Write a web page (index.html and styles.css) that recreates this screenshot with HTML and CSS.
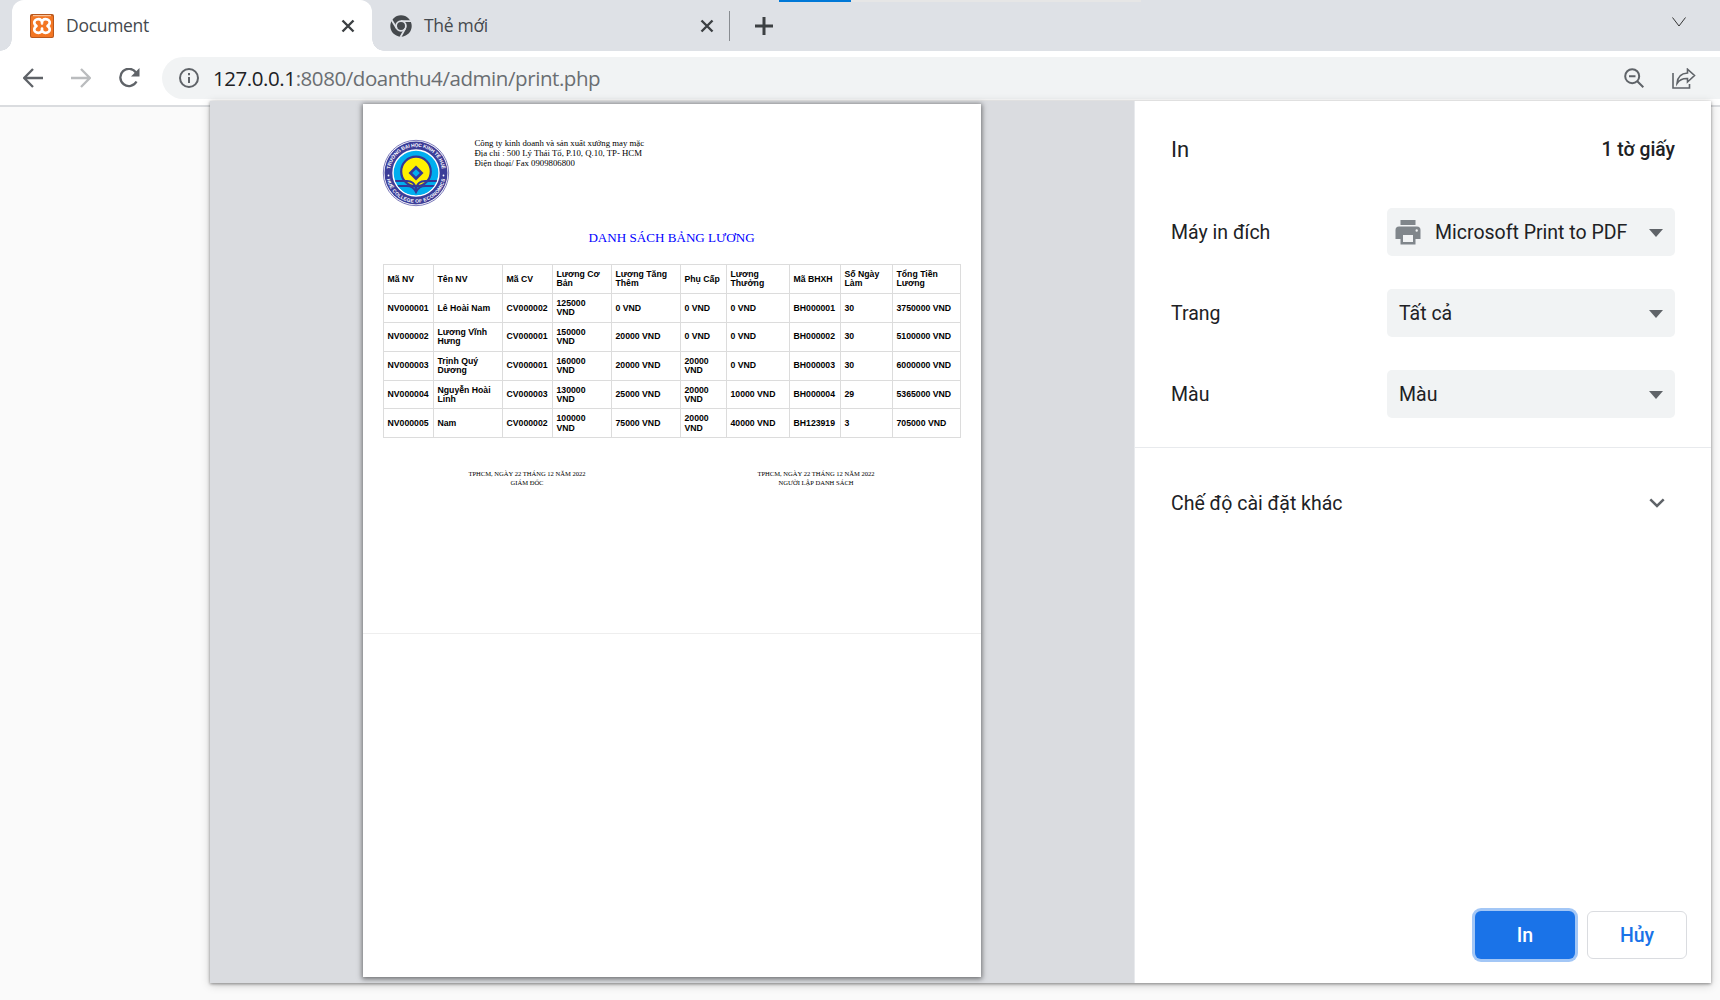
FILE: index.html
```html
<!DOCTYPE html>
<html lang="vi">
<head>
<meta charset="utf-8">
<title>Document</title>
<link rel="stylesheet" href="styles.css">
</head>
<body>
<div class="browser">
  <header class="tabstrip">
    <div class="tab active">
      <svg class="favicon" width="24" height="24" viewBox="0 0 24 24"><rect width="24" height="24" rx="2" fill="#b8571c"/><rect x="1" y="1.500" width="22" height="21.500" rx="1.500" fill="#f37623"/><rect x="3" y="1" width="18" height="1.200" fill="#f9c39b"/><path d="M12 9.500C12.500 6.500 10.500 5.200 8.500 5.200C5.500 5.200 4 7 4.300 9C4.500 10.500 5.500 11.200 6.500 12C5.500 12.800 4.500 13.500 4.300 15C4 17 5.500 18.800 8.500 18.800C10.500 18.800 12.500 17.500 12 14.500C11.500 17.500 13.500 18.800 15.500 18.800C18.500 18.800 20 17 19.700 15C19.500 13.500 18.500 12.800 17.500 12C18.500 11.200 19.500 10.500 19.700 9C20 7 18.500 5.200 15.500 5.200C13.500 5.200 11.500 6.500 12 9.500z" fill="none" stroke="#fff" stroke-width="2.700" stroke-linejoin="round"/></svg>
      <span class="tab-title">Document</span>
      <svg class="close" width="14" height="14" viewBox="0 0 14 14"><path d="M1.500 1.500l11 11M12.500 1.500l-11 11"/></svg>
    </div>
    <div class="tab">
      <svg class="favicon" width="22" height="22" viewBox="0 0 22 22"><circle cx="11" cy="11" r="10.700" fill="#45494d"/><circle cx="11" cy="11" r="4.900" fill="none" stroke="#dee1e6" stroke-width="1.800"/><path d="M11 6.100H21M6.800 13.500L1.600 5M15.200 13.500L10.500 22" stroke="#dee1e6" stroke-width="1.800" fill="none"/></svg>
      <span class="tab-title">Thẻ mới</span>
      <svg class="close" width="14" height="14" viewBox="0 0 14 14"><path d="M1.500 1.500l11 11M12.500 1.500l-11 11"/></svg>
    </div>
    <div class="tab-divider"></div>
    <svg class="plus" width="18" height="18" viewBox="0 0 18 18"><path d="M9 0v18M0 9h18"/></svg>
    <svg class="menu-arrow" width="14" height="10" viewBox="0 0 14 10"><path d="M.5 .5L7 9L13.500 .5"/></svg>
    <div class="progress"><i></i></div>
  </header>
  <nav class="toolbar">
    <svg class="nav" width="20" height="20" viewBox="0 0 20 20"><path d="M20 10H1.500M10 1L1.200 10L10 19"/></svg>
    <svg class="nav forward" width="20" height="20" viewBox="0 0 20 20"><path d="M0 10H18.500M10 1L18.800 10L10 19"/></svg>
    <svg class="nav" width="21" height="20" viewBox="0 0 21 20"><path d="M17.500 13.500A8.600 8.600 0 1 1 17 4.500"/><path class="solid" d="M20.500 0V8.500H12z"/></svg>
    <div class="address">
      <svg class="info" width="20" height="20" viewBox="0 0 20 20"><circle cx="10" cy="10" r="9"/><path d="M10 9v6M10 5v2.200"/></svg>
      <span class="url"><b>127.0.0.1</b>:8080/doanthu4/admin/print.php</span>
      <svg class="magnifier" width="21" height="21" viewBox="0 0 21 21"><circle cx="8.200" cy="8.200" r="7"/><path d="M13.300 13.300l6 6M5 8.200h6.500"/></svg>
      <svg class="share" width="24" height="21" viewBox="0 0 24 21"><path d="M1 5V20H17.500V16M5 15.500C5.500 8.500 9 5.300 15.500 5V1.200L22.500 7.500L15.500 14V10.500C10.500 10.300 7.500 11.700 5 15.500z"/></svg>
    </div>
  </nav>
  <main class="content">
    <section class="dialog">
      <div class="preview">
        <article class="sheet">
          <div class="letterhead">
            <svg class="logo" width="68" height="68" viewBox="0 0 68 68">
              <defs><path id="arc-top" d="M7.800 34a26.200 26.200 0 0 1 52.400 0"/><path id="arc-bottom" d="M4.200 34a29.800 29.800 0 0 0 59.600 0"/><clipPath id="disc"><circle cx="34" cy="34" r="22.300"/></clipPath></defs>
              <circle cx="34" cy="34" r="32.700" fill="#fff" stroke="#5a58a8" stroke-width=".8"/>
              <circle cx="34" cy="34" r="31.500" fill="#3b3d98"/>
              <circle cx="34" cy="34" r="23" fill="#00aeef" stroke="#fff" stroke-width="1.400"/>
              <g clip-path="url(#disc)"><circle cx="34" cy="32.500" r="14.800" fill="#fff200" stroke="#343796" stroke-width="2.200"/>
              <path d="M10 47h14q7 0 10 5q3-5 10-5h14v12H10z" fill="#00aeef"/>
              <path d="M10 42h15q7 0 9 7q2-7 9-7h15M10 47h15q6 0 9 6q3-6 9-6h15" fill="none" stroke="#343796" stroke-width="2"/></g>
              <path d="M34 26.500l7.500 7.500L34 41.500l-7.500-7.500z" fill="#343796"/><path d="M34 30.200l3.800 3.800L34 37.800l-3.800-3.800z" fill="#00aeef"/>
              <g class="ring-text"><text><textPath href="#arc-top" startOffset="50%" text-anchor="middle" textLength="74">TRƯỜNG ĐẠI HỌC KINH TẾ HUẾ</textPath></text><text><textPath href="#arc-bottom" startOffset="50%" text-anchor="middle" textLength="81">HUẾ COLLEGE OF ECONOMICS</textPath></text></g>
              <circle cx="6.500" cy="36.500" r=".9" fill="#fff"/><circle cx="61.500" cy="36.500" r=".9" fill="#fff"/>
            </svg>
            <div class="company"><div>Công ty kinh doanh và sản xuất xưởng may mặc</div><div>Địa chỉ : 500 Lý Thái Tổ, P.10, Q.10, TP- HCM</div><div>Điện thoại/ Fax 0909806800</div></div>
          </div>
          <h1 class="title">DANH SÁCH BẢNG LƯƠNG</h1>
          <table class="salary">
            <colgroup><col class="c1"><col class="c2"><col class="c3"><col class="c4"><col class="c5"><col class="c6"><col class="c7"><col class="c8"><col class="c9"><col class="c10"></colgroup>
            <tr><th>Mã NV</th><th>Tên NV</th><th>Mã CV</th><th>Lương Cơ<br>Bản</th><th>Lương Tăng<br>Thêm</th><th>Phụ Cấp</th><th>Lương<br>Thưởng</th><th>Mã BHXH</th><th>Số Ngày<br>Làm</th><th>Tổng Tiền<br>Lương</th></tr>
            <tr><td>NV000001</td><td>Lê Hoài Nam</td><td>CV000002</td><td>125000<br>VND</td><td>0 VND</td><td>0 VND</td><td>0 VND</td><td>BH000001</td><td>30</td><td>3750000 VND</td></tr>
            <tr><td>NV000002</td><td>Lương Vĩnh<br>Hưng</td><td>CV000001</td><td>150000<br>VND</td><td>20000 VND</td><td>0 VND</td><td>0 VND</td><td>BH000002</td><td>30</td><td>5100000 VND</td></tr>
            <tr><td>NV000003</td><td>Trịnh Quý<br>Dương</td><td>CV000001</td><td>160000<br>VND</td><td>20000 VND</td><td>20000<br>VND</td><td>0 VND</td><td>BH000003</td><td>30</td><td>6000000 VND</td></tr>
            <tr><td>NV000004</td><td>Nguyễn Hoài<br>Linh</td><td>CV000003</td><td>130000<br>VND</td><td>25000 VND</td><td>20000<br>VND</td><td>10000 VND</td><td>BH000004</td><td>29</td><td>5365000 VND</td></tr>
            <tr><td>NV000005</td><td>Nam</td><td>CV000002</td><td>100000<br>VND</td><td>75000 VND</td><td>20000<br>VND</td><td>40000 VND</td><td>BH123919</td><td>3</td><td>705000 VND</td></tr>
          </table>
          <div class="signatures">
            <div>TPHCM, NGÀY 22 THÁNG 12 NĂM 2022<br>GIÁM ĐỐC</div>
            <div>TPHCM, NGÀY 22 THÁNG 12 NĂM 2022<br>NGƯỜI LẬP DANH SÁCH</div>
          </div>
          <hr class="fold">
        </article>
      </div>
      <aside class="settings">
        <div class="heading"><span class="heading-title">In</span><span class="count">1 tờ giấy</span></div>
        <div class="options">
          <div class="option"><span>Máy in đích</span><div class="select with-icon"><svg class="printer" width="26" height="26" viewBox="0 0 26 26"><path fill-rule="evenodd" d="M5.500 1h15v5h-15zM4 7.500h18a3.500 3.500 0 0 1 3.500 3.500v9h-5v5.500h-15V20h-5v-9A3.500 3.500 0 0 1 4 7.500zM8 16h10v7H8zM20.500 11.500a1.200 1.200 0 1 0 2.400 0a1.200 1.200 0 1 0-2.400 0z"/></svg><span>Microsoft Print to PDF</span><i class="caret"></i></div></div>
          <div class="option"><span>Trang</span><div class="select"><span>Tất cả</span><i class="caret"></i></div></div>
          <div class="option"><span>Màu</span><div class="select"><span>Màu</span><i class="caret"></i></div></div>
        </div>
        <div class="more"><span>Chế độ cài đặt khác</span><svg width="16" height="10" viewBox="0 0 16 10"><path d="M1.300 1.300L8 8L14.700 1.300"/></svg></div>
        <div class="actions"><button class="primary">In</button><button class="cancel">Hủy</button></div>
      </aside>
    </section>
  </main>
</div>
</body>
</html>
```
FILE: styles.css
```css
* { box-sizing: border-box; }
body { margin: 0; background: #fafafa; }
.browser { display: flex; flex-direction: column; width: 1720px; height: 1000px; overflow: hidden; }
svg { display: block; flex: none; fill: none; }

.tabstrip { position: relative; display: flex; align-items: center; flex: none; height: 51px; padding-left: 12px; background: #dee1e6; }
.tab { display: flex; align-items: center; width: 360px; height: 51px; padding: 0 18px; font: 17.500px "Open Sans", "Noto Sans", sans-serif; letter-spacing: -.3px; color: #45494e; }
.tab.active { position: relative; padding-right: 17px; background: #fff; border-radius: 12px 12px 0 0; }
.tab.active::before, .tab.active::after { content: ""; position: absolute; bottom: 0; width: 12px; height: 12px; }
.tab.active::before { right: 100%; background: radial-gradient(circle at 0 0, transparent 11.5px, #fff 12px); }
.tab.active::after { left: 100%; background: radial-gradient(circle at 100% 0, transparent 11.5px, #fff 12px); }
.tab-title { margin-left: 12px; padding-bottom: 1px; }
.close { margin-left: auto; stroke: #3c4043; stroke-width: 2.400; }
.tab-divider { width: 1px; height: 30px; margin-left: -3px; background: #888c91; }
.plus { margin-left: 25px; stroke: #3c4043; stroke-width: 3; }
.menu-arrow { margin: -7px 34px 0 auto; stroke: #333; }
.progress { position: absolute; top: 0; left: 779px; width: 362px; height: 2px; background: #e6e6e6; }
.progress i { display: block; width: 72px; height: 2px; background: #0078d7; }

.toolbar { display: flex; align-items: center; flex: none; height: 56px; padding: 0 0 0 23px; gap: 28px; background: #fff; border-bottom: 2px solid #dadcdf; }
.nav { stroke: #5f6368; stroke-width: 2.300; }
.forward { stroke: #babcbe; }
.nav .solid { fill: #5f6368; stroke: none; }
.address { display: flex; align-items: center; flex: 1; height: 42px; margin-left: -6px; padding: 0 24px 0 17px; background: #f1f3f4; border-radius: 21px 0 0 21px; }
.info, .magnifier, .share { stroke: #5f6368; stroke-width: 2; }
.share { margin-left: 27px; stroke-width: 1.600; }
.url { margin-left: 14px; font: 20.500px "Open Sans", "Noto Sans", sans-serif; letter-spacing: -.430px; color: #6a6e72; white-space: nowrap; }
.url b { font-weight: 400; color: #202124; }
.magnifier { margin-left: auto; }

.content { flex: 1; padding-left: 210px; }
.dialog { position: relative; display: flex; width: 1501px; height: 882px; margin-top: -6px; background: #fff; box-shadow: 0 1px 3px rgba(0,0,0,.4), 0 2px 9px rgba(0,0,0,.18); }
.preview { display: flex; justify-content: center; width: 925px; padding: 3px 1px 6px 0; background: #dadce0; border-right: 1px solid #e8eaed; }
.sheet { width: 618px; height: 873px; padding: 35px 20px 0; background: #fff; box-shadow: 0 1px 5px 1px rgba(0,0,0,.5); color: #000; }
.letterhead { display: flex; height: 68px; }
.logo { margin-left: -1px; }
.company { margin: -1px 0 0 25px; font: 8.750px/10px "Liberation Serif", serif; white-space: nowrap; }
.title { margin: 22px 0 17px; font: 13.100px/18px "Liberation Serif", serif; color: #00f; text-align: center; }
.salary { width: 578px; table-layout: fixed; border-collapse: collapse; font: bold 8.700px/9.500px "Liberation Sans", sans-serif; white-space: nowrap; }
.salary tr { height: 28.900px; }
.salary th, .salary td { padding: 1px 4px 0; border: 1px solid #dcdcdc; text-align: left; vertical-align: middle; }
.c1 { width: 50px; } .c2 { width: 69px; } .c3 { width: 50px; } .c4 { width: 59px; } .c5 { width: 69px; }
.c6 { width: 46px; } .c7 { width: 63px; } .c8 { width: 51px; } .c9 { width: 52px; } .c10 { width: 68px; }
.signatures { display: grid; grid-template-columns: 1fr 1fr; margin-top: 31px; font: 6.570px/9px "Liberation Serif", serif; text-align: center; }
.fold { height: 1px; margin: 146px -20px 0; border: 0; background: #eee; }
.ring-text { fill: #fff; font: bold 4.900px "Liberation Sans", sans-serif; }

.settings { display: flex; flex-direction: column; flex: 1; font: 19.500px/24px Roboto, sans-serif; color: #202124; }
.heading { display: flex; justify-content: space-between; align-items: center; height: 96px; padding: 1px 36px 0; }
.heading-title { font-size: 22px; }
.count { font-weight: 500; font-size: 19.300px; }
.options { display: flex; flex-direction: column; gap: 33px; padding: 11px 36px 29px; border-bottom: 1px solid #e8eaed; }
.option { display: flex; align-items: center; justify-content: space-between; }
.option span, .more span { padding-top: 2px; }
.select { display: flex; align-items: center; width: 288px; height: 48px; padding: 0 12px; background: #f1f3f4; border-radius: 5px; }
.with-icon { padding-left: 8px; }
.printer { margin-right: 14px; fill: #80868b; }
.caret { margin: 2px 0 0 auto; border: 7.500px solid transparent; border-top: 8px solid #5f6368; border-bottom: 0; }
.more { display: flex; align-items: center; justify-content: space-between; height: 109px; padding: 0 46px 0 36px; }
.more svg { stroke: #5f6368; stroke-width: 2.500; }
.actions { display: flex; justify-content: flex-end; gap: 12px; margin-top: auto; padding: 0 24px 24px 0; }
button { width: 100px; height: 48px; padding: 1px 0 0; border: 1px solid #dadce0; border-radius: 6px; background: #fff; font: 500 19.500px Roboto, sans-serif; color: #1a73e8; }
.primary { border: 0; background: #1a73e8; color: #fff; box-shadow: 0 0 0 3px #a3c7f6; }
```
